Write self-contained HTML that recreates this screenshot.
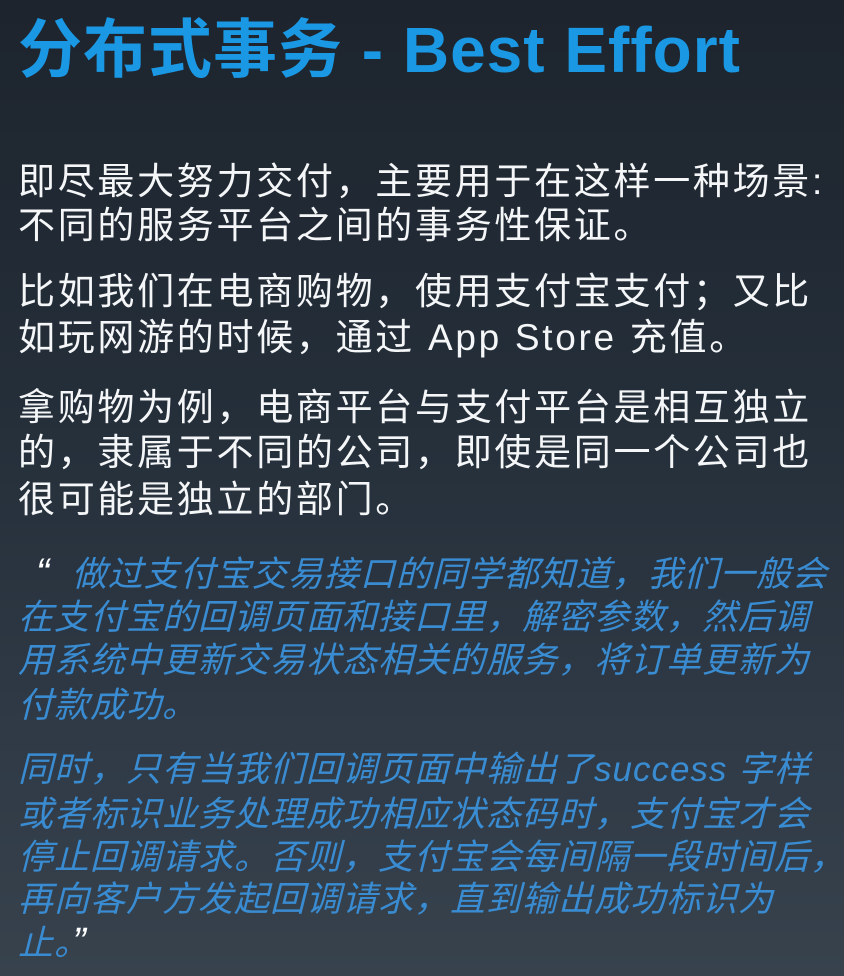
<!DOCTYPE html>
<html><head><meta charset="utf-8"><style>
html,body{margin:0;padding:0}
body{width:844px;height:976px;overflow:hidden;position:relative;background:linear-gradient(180deg,#1d242d 0%,#242e39 40%,#2f3a46 75%,#37424d 100%);font-family:"Liberation Sans","Noto Sans CJK SC",sans-serif}
.t{position:absolute;left:18px;top:15px;font-size:64px;font-weight:bold;color:#1a98e4;white-space:nowrap;line-height:70px;letter-spacing:1px}
.l{position:absolute;left:18px;white-space:nowrap;font-size:37px;letter-spacing:2.7px;line-height:44px;color:#f4f6f8}
.q{color:#3a8cd2;font-style:italic;font-size:35px;letter-spacing:1px}
.m{color:#fff;font-style:italic;font-size:40px}
</style></head><body>
<div class="t">分布式事务 - Best Effort</div>
<div class="l" style="top:160px">即尽最大努力交付，主要用于在这样一种场景:</div>
<div class="l" style="top:204px">不同的服务平台之间的事务性保证。</div>
<div class="l" style="top:270px">比如我们在电商购物，使用支付宝支付；又比</div>
<div class="l" style="top:316px">如玩网游的时候，通过 App Store 充值。</div>
<div class="l" style="top:386px">拿购物为例，电商平台与支付平台是相互独立</div>
<div class="l" style="top:431px">的，隶属于不同的公司，即使是同一个公司也</div>
<div class="l" style="top:478px">很可能是独立的部门。</div>
<div class="l q" style="top:551px;left:36px"><span class="m">“</span>&nbsp; 做过支付宝交易接口的同学都知道，我们一般会</div>
<div class="l q" style="top:596px">在支付宝的回调页面和接口里，解密参数，然后调</div>
<div class="l q" style="top:639px">用系统中更新交易状态相关的服务，将订单更新为</div>
<div class="l q" style="top:684px">付款成功。</div>
<div class="l q" style="top:748px">同时，只有当我们回调页面中输出了success 字样</div>
<div class="l q" style="top:793px">或者标识业务处理成功相应状态码时，支付宝才会</div>
<div class="l q" style="top:836px">停止回调请求。否则，支付宝会每间隔一段时间后，</div>
<div class="l q" style="top:878px">再向客户方发起回调请求，直到输出成功标识为</div>
<div class="l q" style="top:920px">止。<span class="m">”</span></div>
</body></html>
